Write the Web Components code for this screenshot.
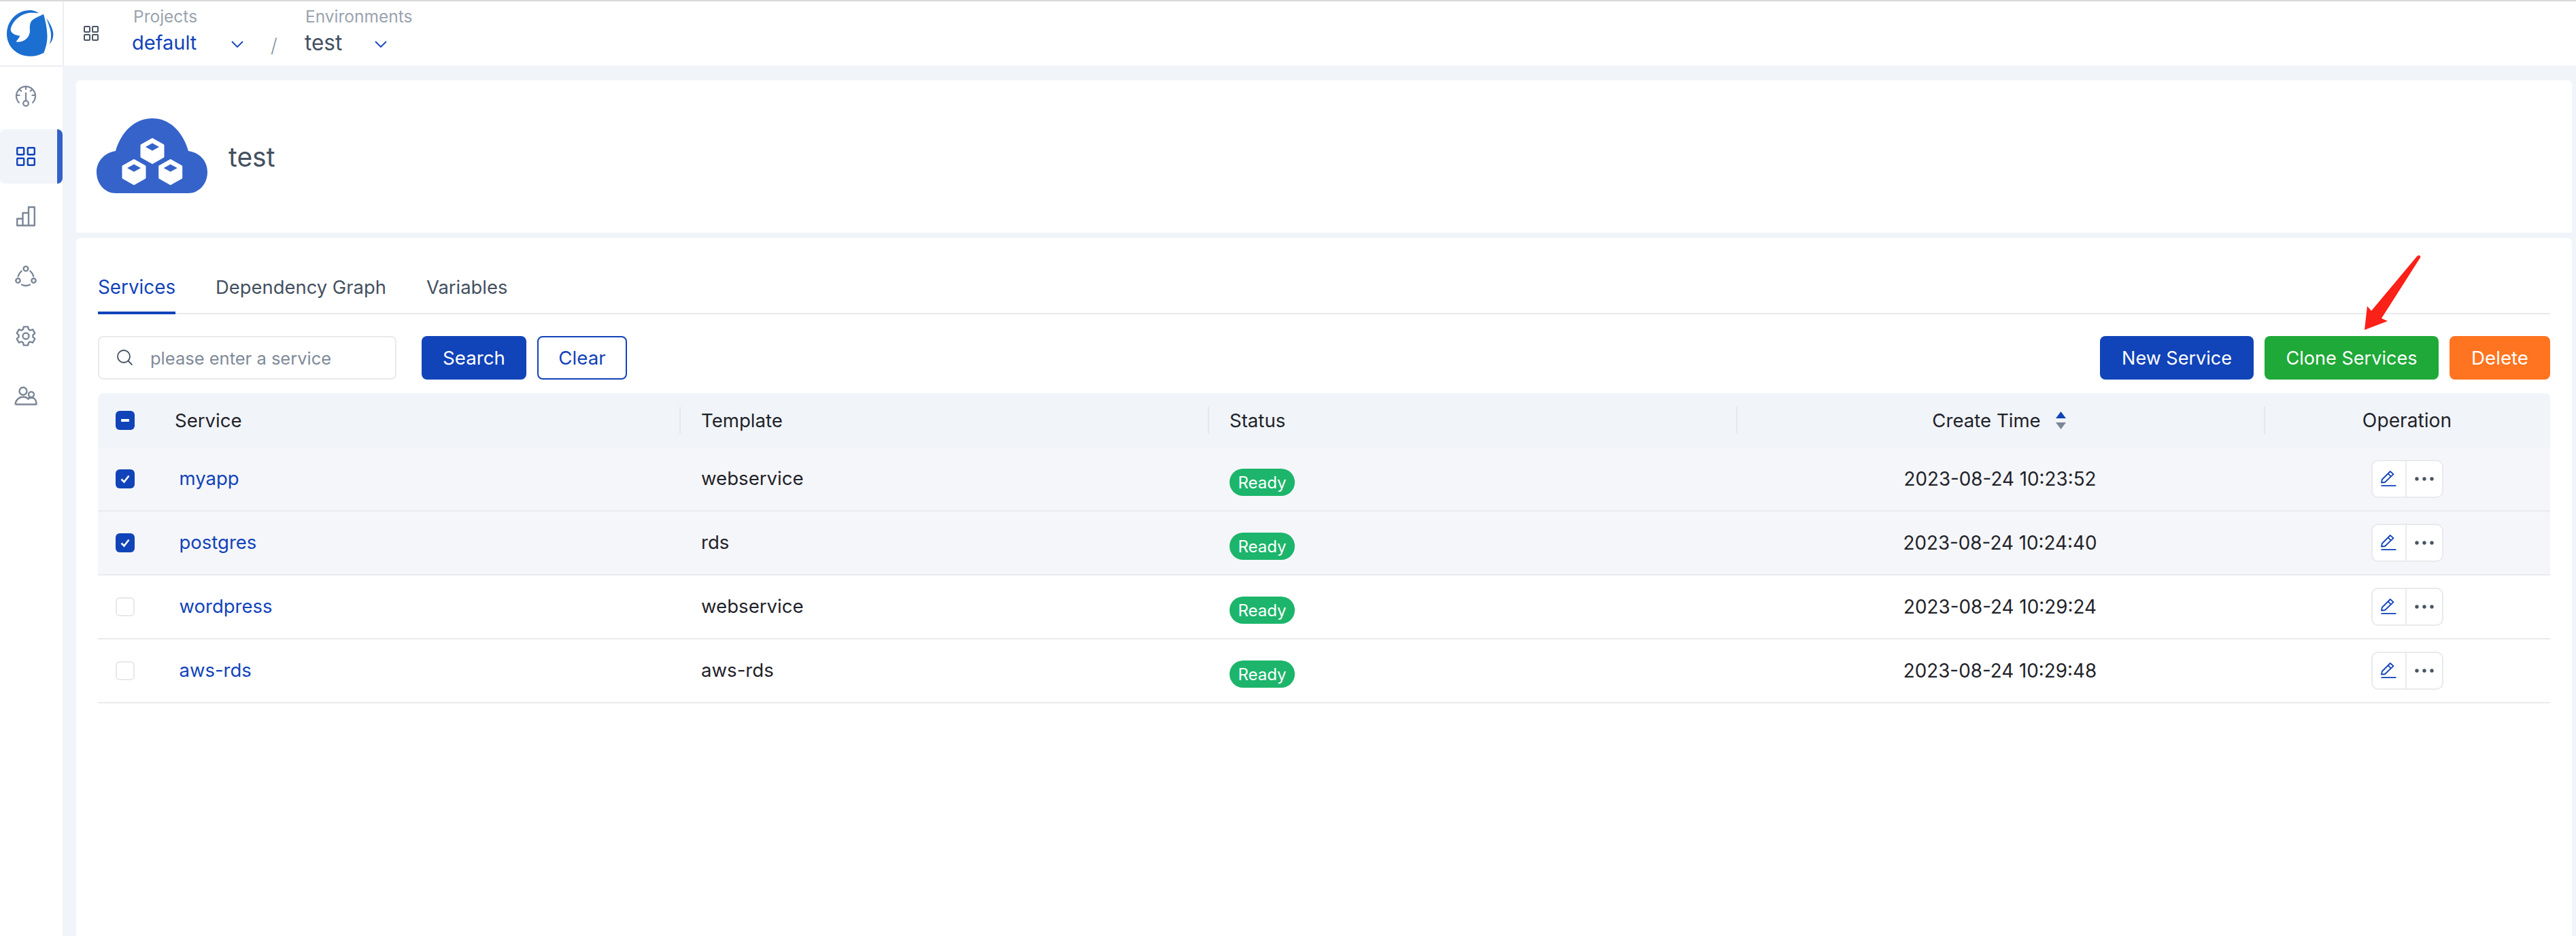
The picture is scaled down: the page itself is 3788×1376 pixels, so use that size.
<!DOCTYPE html>
<html><head><meta charset="utf-8"><title>test</title>
<style>
html,body{margin:0;padding:0;background:#f1f4f9}
body{font-family:Inter,"Liberation Sans",sans-serif;color:#1f2329;width:3788px;height:1376px;overflow:hidden}
</style></head><body>
<app-shell>
  <top-bar></top-bar>
  <side-nav slot="nav"></side-nav>
  <env-card slot="main" name="test"></env-card>
  <services-card slot="main">
    <tab-bar></tab-bar>
    <svc-toolbar></svc-toolbar>
    <svc-table>
      <svc-head></svc-head>
      <svc-row name="myapp" template="webservice" time="2023-08-24 10:23:52" selected></svc-row>
      <svc-row name="postgres" template="rds" time="2023-08-24 10:24:40" selected></svc-row>
      <svc-row name="wordpress" template="webservice" time="2023-08-24 10:29:24"></svc-row>
      <svc-row name="aws-rds" template="aws-rds" time="2023-08-24 10:29:48"></svc-row>
    </svc-table>
  </services-card>
  <red-arrow slot="overlay"></red-arrow>
</app-shell>
<script>
function def(name, html, init){
  customElements.define(name, class extends HTMLElement{
    constructor(){super();this.attachShadow({mode:'open'});}
    connectedCallback(){
      this.shadowRoot.innerHTML = typeof html==='function'?html(this):html;
    }
  });
}
const BLUE='#1143b9';
const COLS='855px 777px 777px 776px 421px';

def('app-shell',`<style>
:host{display:flex;flex-direction:column;width:3788px;height:1376px;border-top:2px solid #d9d9d9;box-sizing:border-box;position:relative}
.body{display:flex;flex:1;min-height:0}
.main{flex:1;display:flex;flex-direction:column;gap:8px;padding:22px 6px 0 20px;min-width:0}
</style><slot></slot><div class="body"><slot name="nav"></slot><div class="main"><slot name="main"></slot></div></div><slot name="overlay"></slot>`);

def('top-bar',`<style>
:host{display:flex;height:94px;background:#fff;flex:none;align-items:stretch}
.logo{width:92px;height:94px;border-right:2px solid #eceef2;box-sizing:content-box;position:relative}
.logo svg{display:block;position:absolute;left:0;top:-2px}
.grid{margin:0 0 0 29px;align-self:center;display:block}
.sel{display:flex;flex-direction:column;width:0;flex:none}
.lab{font-size:24.5px;line-height:28px;color:#9aa3af;margin-top:8px;white-space:nowrap}
.val{font-size:29px;line-height:34px;margin-top:8px;font-weight:400;display:flex;white-space:nowrap}
.chev{position:absolute;top:58px}
.a{margin-left:51px}.b{margin-left:253px}
.a .val{color:${BLUE};margin-left:-2px}
.b .val{color:#44505f;margin-left:-1px;font-size:31.5px}
.slash{color:#8a93a0;font-size:28px;font-weight:300;position:absolute;left:398px;top:48px}
</style>
<div class="logo"><svg width="92" height="96" viewBox="0 0 276 288" fill="#1b6fd0">
<path d="M172 58C155 48 145 45 132 45C75 45 30 92 30 150C30 205 75 248 132 248C155 248 175 242 193 233C205 205 210 175 208 150C207 120 200 90 192 62C180 70 160 75 148 85C133 95 130 110 132 135C132 165 105 190 70 184C78 175 84 167 88 158C65 155 46 145 47 128C55 90 95 58 135 56C148 56 162 58 172 58Z"/>
<path d="M205 80C222 105 235 130 235 150C235 170 228 185 218 195C226 175 228 150 220 125C216 110 210 95 205 80Z"/>
</svg></div>
<svg class="grid" width="22" height="22" viewBox="0 0 22 22" fill="none" stroke="#4a5563" stroke-width="2"><rect x="1" y="1" width="8" height="8" rx="1"/><rect x="13" y="1" width="8" height="8" rx="1"/><rect x="1" y="13" width="8" height="8" rx="1"/><rect x="13" y="13" width="8" height="8" rx="1"/></svg>
<div class="sel a"><div class="lab">Projects</div><div class="val">default</div></div>
<svg class="chev" style="left:340px" width="18" height="11" viewBox="0 0 18 11" fill="none" stroke="${BLUE}" stroke-width="1.8"><path d="M1 1l8 8 8-8"/></svg>
<span class="slash">/</span>
<div class="sel b"><div class="lab">Environments</div><div class="val">test</div></div>
<svg class="chev" style="left:551px" width="18" height="11" viewBox="0 0 18 11" fill="none" stroke="${BLUE}" stroke-width="1.8"><path d="M1 1l8 8 8-8"/></svg>`);

const I='#7b8696';
const navIcons=[
`<svg width="32" height="34" viewBox="0 0 32 34" fill="none" stroke="${I}" stroke-width="2.2"><path d="M6.5 26.5A14 14 0 1 1 25.5 26.5"/><path d="M16 2v5M16 11v12M2.5 15h5M24.5 15h5M6 6l4 3.5M26 6l-4 3.5"/><circle cx="16" cy="27" r="3.8"/></svg>`,
`<svg width="28" height="28" viewBox="0 0 28 28" fill="none" stroke="${BLUE}" stroke-width="2.4"><rect x="1.2" y="1.2" width="10" height="10" rx="1"/><rect x="16.8" y="1.2" width="10" height="10" rx="1"/><rect x="1.2" y="16.8" width="10" height="10" rx="1"/><rect x="16.8" y="16.8" width="10" height="10" rx="1"/></svg>`,
`<svg width="28" height="30" viewBox="0 0 28 30" fill="none" stroke="${I}" stroke-width="2.4"><path d="M1.2 28.5V18.5H9.5V28.5ZM9.5 28.5V10H18V28.5ZM18 28.5V1.5H26.8V28.5Z" stroke-linejoin="round"/></svg>`,
`<svg width="32" height="32" viewBox="0 0 32 32" fill="none" stroke="${I}" stroke-width="2.4" stroke-linecap="round"><circle cx="16" cy="5" r="3.4"/><circle cx="4.5" cy="22.5" r="3.2"/><circle cx="27.5" cy="22.5" r="3.2"/><path d="M9.5 8.5C7 11 5.5 13.5 4.8 16M22.5 8.5C25 11 26.5 13.5 27.2 16M10 28.5C14 30.5 18 30.5 22 28.5"/></svg>`,
`<svg width="32" height="32" viewBox="0 0 24 24" fill="none" stroke="${I}" stroke-width="1.8" stroke-linejoin="round"><path d="M9.6 1.8h4.8l.6 2.9 1.8 1 2.8-1 2.4 4.2-2.2 2v2.2l2.2 2-2.4 4.2-2.8-1-1.8 1-.6 2.9H9.6l-.6-2.9-1.8-1-2.8 1-2.4-4.2 2.2-2v-2.2l-2.2-2 2.4-4.2 2.8 1 1.8-1z"/><circle cx="12" cy="12" r="3.4"/></svg>`,
`<svg width="34" height="28" viewBox="0 0 34 28" fill="none" stroke="${I}" stroke-width="2.4" stroke-linejoin="round"><circle cx="13" cy="7" r="5.5"/><circle cx="25" cy="12" r="4"/><path d="M1.5 26.5C2 20 7 15.5 13 15.5c3.5 0 6.5 1.5 8.5 4M19 26.5h-17.5M20 18c2-1.5 8-2 10 .5 2 2 2.5 5 2.5 8H1.5"/></svg>`];
def('side-nav',`<style>
:host{display:flex;flex-direction:column;width:92px;flex:none;background:#fff;box-sizing:border-box;border-top:2px solid #eceef2;padding-top:4px;gap:8px}
.i{height:80px;width:92px;box-sizing:border-box;display:flex;align-items:center;justify-content:center;padding-right:16px}
.on{background:#f1f4f9;border-radius:8px;position:relative}
.on::after{content:"";position:absolute;right:0;top:0;bottom:0;width:8px;background:#3461c8;border-radius:0 8px 8px 0}
svg{display:block}
</style>${navIcons.map((s,i)=>`<div class="i ${i==1?'on':''}">${s}</div>`).join('')}`);

def('env-card',h=>`<style>
:host{display:flex;align-items:center;height:224px;background:#fff;border-radius:6px 6px 0 0;padding-left:30px;flex:none;gap:30px}
.t{font-size:39px;color:#44505f}
svg{display:block;margin-top:-2px}
</style>
<svg width="164" height="110" viewBox="0 0 164 110">
<path fill="#3563c9" d="M28 110C12 110 0 96 0 79C0 62 13 50 28 48C36 20 56 0 82 0C108 0 127 20 135 48C151 50 163 62 163 79C163 96 151 110 135 110Z"/>
${[[82,48],[55,79],[108.7,79]].map(([x,y])=>`<g transform="translate(${x} ${y})"><path fill="#fff" stroke="#fff" stroke-width="3" stroke-linejoin="round" d="M0-17.5L16-8.5V8.5L0 17.5L-16 8.5V-8.5Z"/><path fill="#3563c9" d="M0-11.5L10-6L0-.5L-10-6Z"/></g>`).join('')}
</svg><div class="t">${h.getAttribute('name')}</div>`);

def('services-card',`<style>
:host{display:flex;flex-direction:column;flex:1;background:#fff;padding:0 32px;min-height:0;border-radius:6px 6px 0 0}
</style><slot></slot>`);

def('tab-bar',`<style>
:host{display:flex;gap:59px;height:112px;box-sizing:border-box;padding-top:52px;border-bottom:2px solid #e9eaec;font-size:27.4px;color:#44505f;flex:none;line-height:40px}
.t{height:60px;box-sizing:border-box;white-space:nowrap}
.on{color:${BLUE};border-bottom:4px solid ${BLUE};height:60px;margin-bottom:-2px;font-size:27.8px}
</style><div class="t on">Services</div><div class="t">Dependency Graph</div><div class="t">Variables</div>`);

def('svc-button',h=>`<style>
:host{display:inline-flex;align-items:center;justify-content:center;box-sizing:border-box;height:64px;border-radius:8px;font-size:var(--fs,27.7px);color:#fff;background:var(--bg,${BLUE});white-space:nowrap;flex:none}
:host([outline]){background:#fff;color:${BLUE};border:2px solid ${BLUE}}
</style><slot></slot>`);

def('svc-toolbar',`<style>
:host{display:flex;margin-top:32px;height:64px;flex:none;align-items:stretch}
.s{width:439px;box-sizing:border-box;border:2px solid #e9eaec;border-radius:8px;display:flex;align-items:center;padding-left:26px;font-size:25.5px;color:#7f8a99;white-space:nowrap}
.s svg{margin-right:26px;margin-top:-2px;display:block}
.sp{flex:1}
</style>
<div class="s"><svg width="23" height="23" viewBox="0 0 23 23" fill="none" stroke="#44505f" stroke-width="1.8"><circle cx="10" cy="10" r="9"/><path d="M16.5 16.5l6 6"/></svg>please enter a service</div>
<svg-b style="width:37px"></svg-b>
<svc-button style="width:154px">Search</svc-button>
<svg-b style="width:16px"></svg-b>
<svc-button outline style="width:132px">Clear</svc-button>
<div class="sp"></div>
<svc-button style="width:226px;--fs:27px">New Service</svc-button>
<svg-b style="width:16px"></svg-b>
<svc-button style="width:256px;--bg:#1fa938;--fs:27.1px">Clone Services</svc-button>
<svg-b style="width:16px"></svg-b>
<svc-button style="width:148px;--bg:#ff7420">Delete</svc-button>`);
def('svg-b',`<style>:host{display:block;flex:none}</style>`);

def('svc-table',`<style>:host{display:block;margin-top:20px}</style><slot></slot>`);

def('check-box',h=>{
 const s=h.getAttribute('state');
 return `<style>:host{display:block;width:28px;height:28px;box-sizing:border-box;border-radius:6px;flex:none;${s?`background:${BLUE}`:'border:2px solid #e6e8ec;background:#fff'}}
svg{display:block}</style>${s==='check'?`<svg width="28" height="28" viewBox="0 0 28 28" fill="none" stroke="#fff" stroke-width="2.6"><path d="M8.5 14.5l4 4L19.5 9.5"/></svg>`:s==='mixed'?`<svg width="28" height="28"><rect x="8" y="12" width="12" height="4" rx="1" fill="#fff"/></svg>`:''}`;
});

const cellCss=`
:host{display:grid;grid-template-columns:${COLS};align-items:center;font-size:27.6px;color:#1f2329}
.c{display:flex;align-items:center;box-sizing:border-box;padding-left:32px;white-space:nowrap}
.first{padding-left:26px}
.mid{justify-content:center;padding-left:0}
`;
def('svc-head',`<style>${cellCss}
:host{height:80px;background:#f1f4f9;border-radius:8px 8px 0 0}
.sep{position:relative}
.sep::before{content:"";position:absolute;left:0;top:-20px;height:40px;width:2px;background:#e6e8ec}
.c{height:0}
.first span{margin-left:59px}
.sort{margin-left:22px;display:block}
.ct{padding-right:3px}
.op{font-size:28.2px}
</style>
<div class="c first"><check-box state="mixed"></check-box><span>Service</span></div>
<div class="c sep">Template</div>
<div class="c sep">Status</div>
<div class="c sep mid ct"><span>Create Time</span><svg class="sort" width="15" height="26" viewBox="0 0 15 26"><path d="M7.5 0L15 10H0Z" fill="${BLUE}"/><path d="M0 16H15L7.5 26Z" fill="#7b8696"/></svg></div>
<div class="c sep mid op">Operation</div>`);

def('svc-row',h=>`<style>${cellCss}
:host{height:94px;box-sizing:border-box;border-bottom:2px solid #e9eaec;background:${h.hasAttribute('selected')?'#f5f6f9':'#fff'}}
.first a{margin-left:65.5px;color:${BLUE};font-size:27.5px;margin-bottom:3px}
.tp{margin-bottom:2px}
.badge{display:inline-flex;align-items:center;justify-content:center;width:96px;height:40px;border-radius:20px;background:#1cb56b;color:#fff;font-size:24px;margin-top:10px}
.tm{font-size:27.8px}
.ops{display:flex;width:106px;height:56px;box-sizing:border-box;border:2px solid #e9eaec;border-radius:10px;background:#fff}
.e{width:48px;display:flex;align-items:center;justify-content:center;border-right:2px solid #e9eaec;flex:none;box-sizing:content-box}
.d{flex:1;display:flex;align-items:center;justify-content:center}
svg{display:block}
</style>
<div class="c first"><check-box state="${h.hasAttribute('selected')?'check':''}"></check-box><a>${h.getAttribute('name')}</a></div>
<div class="c"><span class="tp">${h.getAttribute('template')}</span></div>
<div class="c"><span class="badge">Ready</span></div>
<div class="c mid tm">${h.getAttribute('time')}</div>
<div class="c mid"><div class="ops"><div class="e"><svg width="23" height="24" viewBox="0 0 23 24" fill="none" stroke="${BLUE}" stroke-width="1.8" stroke-linejoin="round"><path d="M1 17.5L1.8 13 13.8 1 18.5 5.2 6 17Z"/><path d="M10.5 4L15 8.7"/><path d="M0.5 22h22"/></svg></div><div class="d"><svg width="28" height="6" viewBox="0 0 28 6" fill="#4a5563"><circle cx="3" cy="3" r="2.7"/><circle cx="14" cy="3" r="2.7"/><circle cx="25" cy="3" r="2.7"/></svg></div></div></div>`);

def('red-arrow',`<style>:host{position:absolute;left:3470px;top:368px;display:block}svg{display:block}</style>
<svg width="100" height="120" viewBox="0 0 100 120"><path fill="#fb2018" d="M7 115L11 80L17 87L84 7Q88 3 89.5 8L32 98L41 102Z"/></svg>`);
</script>
</body></html>
